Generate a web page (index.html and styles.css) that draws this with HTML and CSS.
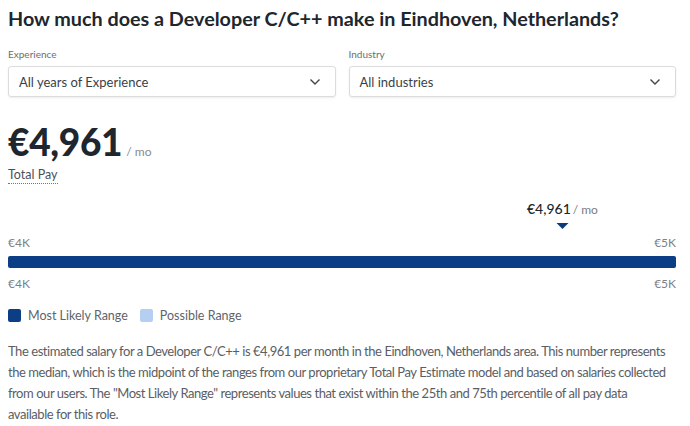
FILE: index.html
```html
<!DOCTYPE html>
<html>
<head>
<meta charset="utf-8">
<link rel="stylesheet" href="styles.css">
</head>
<body>
<div class="page">
  <h1 class="title">How much does a Developer C/C++ make in Eindhoven, Netherlands?</h1>
  <div class="filters">
    <div class="filter">
      <div class="label">Experience</div>
      <div class="select"><span>All years of Experience</span>
        <svg class="chev" width="12" height="8" viewBox="0 0 12 8"><path d="M1.5 1.5 L6 6 L10.5 1.5" fill="none" stroke="#444" stroke-width="1.4"/></svg>
      </div>
    </div>
    <div class="filter">
      <div class="label">Industry</div>
      <div class="select"><span>All industries</span>
        <svg class="chev" width="12" height="8" viewBox="0 0 12 8"><path d="M1.5 1.5 L6 6 L10.5 1.5" fill="none" stroke="#444" stroke-width="1.4"/></svg>
      </div>
    </div>
  </div>
  <div class="amount"><span class="big">€4,961</span><span class="per">/ mo</span></div>
  <div class="total"><span class="total-pay">Total Pay</span></div>

  <div class="chart">
    <div class="marker-row">
      <div class="marker" style="left: 83%">
        <div class="marker-val"><span class="mv">€4,961</span><span class="mp">/ mo</span></div>
        <div class="tri"></div>
      </div>
    </div>
    <div class="axis"><span>€4K</span><span>€5K</span></div>
    <div class="bar"></div>
    <div class="axis"><span>€4K</span><span>€5K</span></div>
  </div>

  <div class="legend">
    <div class="item"><span class="sq dark"></span>Most Likely Range</div>
    <div class="item"><span class="sq light"></span>Possible Range</div>
  </div>

  <p class="desc">The estimated salary for a Developer C/C++ is €4,961 per month in the Eindhoven, Netherlands area. This number represents the median, which is the midpoint of the ranges from our proprietary Total Pay Estimate model and based on salaries collected from our users. The "Most Likely Range" represents values that exist within the 25th and 75th percentile of all pay data <span class="nowrap">available for this role.</span></p>
</div>
</body>
</html>
```

FILE: styles.css
```css
* { box-sizing: border-box; }
body {
  margin: 0;
  padding: 8px;
  font-family: Lato, "Open Sans", sans-serif;
  color: #20262e;
  background: #fff;
}
.page { width: 668px; }
.title {
  margin: 0;
  font-size: 19.75px;
  font-weight: 700;
  line-height: 22px;
  color: #20262e;
}
.filters {
  display: flex;
  gap: 13px;
  margin-top: 18px;
}
.filter { flex: 1; }
.label {
  font-size: 10px;
  color: #6b6e72;
  line-height: 12px;
  margin-bottom: 6px;
}
.select {
  height: 31px;
  border: 1px solid #dcdcdc;
  border-radius: 3px;
  box-shadow: 0 1px 2px rgba(0,0,0,0.08);
  display: flex;
  align-items: center;
  justify-content: space-between;
  padding: 0 12px 0 10px;
  font-size: 13px;
  color: #3a3f45;
}
.chev { margin-right: 2px; }
.amount {
  margin-top: 25px;
  display: flex;
  align-items: baseline;
}
.big {
  font-size: 37px;
  font-weight: 900;
  line-height: 40px;
  color: #20262e;
  letter-spacing: -0.3px;
}
.per {
  font-size: 12px;
  color: #868a8f;
  margin-left: 4px;
}
.total { margin-top: 1px; }
.total-pay {
  font-size: 12.5px;
  color: #4b5058;
  border-bottom: 1.5px dotted #3c9a4a;
  padding-bottom: 1px;
}
.chart { margin-top: 17px; }
.marker-row {
  position: relative;
  height: 36px;
}
.marker {
  position: absolute;
  top: 0;
  transform: translateX(-50%);
  display: flex;
  flex-direction: column;
  align-items: center;
}
.marker-val { white-space: nowrap; line-height: 18px; }
.mv { font-size: 14px; color: #20262e; font-weight: 500; }
.mp { font-size: 12px; color: #7a7e83; margin-left: 2px; }
.tri {
  margin-top: 4px;
  width: 0; height: 0;
  border-left: 6px solid transparent;
  border-right: 6px solid transparent;
  border-top: 6px solid #0c3b7c;
}
.axis {
  display: flex;
  justify-content: space-between;
  font-size: 12px;
  color: #7e8186;
  line-height: 16px;
}
.bar {
  height: 12px;
  background: #0c3e85;
  border-radius: 2px;
  margin: 5px 0 8px;
}
.legend {
  display: flex;
  gap: 12px;
  margin-top: 16px;
  font-size: 12.5px;
  color: #60646a;
}
.item { display: flex; align-items: center; }
.sq {
  width: 13px; height: 13px;
  border-radius: 2px;
  margin-right: 7px;
}
.sq.dark { background: #0c3e85; }
.sq.light { background: #b4cff2; }
.desc {
  margin: 18px -6px 0 0;
  font-size: 13px;
  line-height: 21px;
  letter-spacing: -0.45px;
  color: #5a5e64;
}
.nowrap { white-space: nowrap; }
```
